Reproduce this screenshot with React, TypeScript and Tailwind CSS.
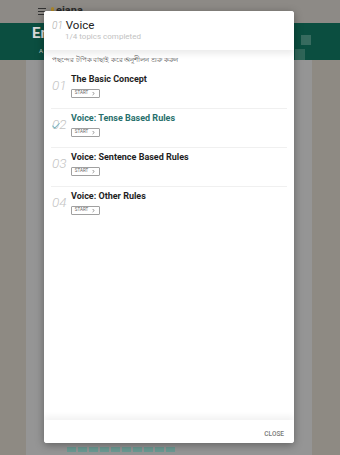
import { ChevronRight, Check } from "lucide-react";

const topics = [
  { no: "01", title: "The Basic Concept", done: false },
  { no: "02", title: "Voice: Tense Based Rules", done: true },
  { no: "03", title: "Voice: Sentence Based Rules", done: false },
  { no: "04", title: "Voice: Other Rules", done: false },
];

const font = { fontFamily: "Roboto, 'Noto Sans', 'Liberation Sans', sans-serif" };

export default function App() {
  return (
    <div className="relative w-[340px] h-[455px] overflow-hidden bg-[#8e8a83]" style={font}>
      {/* dimmed page behind the dialog */}
      <div className="flex flex-col h-full">
        <div className="h-[23px] bg-[#8d8a86] flex items-center pl-[38px] gap-[5px]">
          <div className="flex flex-col gap-[2px] w-[8px]">
            <div className="h-[1px] bg-[#333]" />
            <div className="h-[1px] bg-[#333]" />
            <div className="h-[1px] bg-[#333]" />
          </div>
          <div className="flex items-center gap-[2px] -mt-[3px]">
            <div className="w-[3px] h-[6px] rounded-full bg-[#b08a2a]" />
            <span className="text-[11px] font-bold text-[#2a2a2a] leading-none">eiana</span>
          </div>
        </div>
        <div className="h-[37px] bg-[#0b4e40] flex justify-between pl-[32px]">
          <div className="flex flex-col w-[20px]">
            <span className="text-[15px] font-bold text-[#d8d8d8] leading-[20px] whitespace-nowrap">En</span>
            <span className="text-[6px] text-[#cfcfcf] mt-[3px] pl-[7px]">A</span>
          </div>
          <div className="flex flex-col items-end gap-[4px] pt-[12px]">
            <div className="w-[10px] h-[10px] bg-[#376b5f] mr-[29px]" />
            <div className="w-[10px] h-[11px] bg-[#2f6558] mr-[35px]" />
          </div>
        </div>
        <div className="flex flex-1">
          <div className="w-[26px] bg-[#8e8a83]" />
          <div className="flex-1 bg-[#959595] flex flex-col justify-end items-start pl-[41px] pb-[3px]">
            <div className="flex gap-[2px]">
              {Array.from({ length: 10 }).map((_, i) => (
                <div key={i} className="w-[9px] h-[5px] bg-[#6c9a93]" />
              ))}
            </div>
          </div>
          <div className="w-[28px] bg-[#8e8a83]" />
        </div>
      </div>

      {/* dialog */}
      <div className="absolute left-[44px] top-[11px] w-[250px] h-[432px] bg-white rounded-[3px] shadow-[0_2px_8px_rgba(0,0,0,0.35)] flex flex-col overflow-hidden">
        <div className="h-[39px] flex flex-col pl-[8px] pt-[7px] relative z-10 bg-white shadow-[0_4px_6px_rgba(0,0,0,0.08)]">
          <div className="flex items-baseline gap-[3px]">
            <span className="text-[10px] italic font-light text-[#aaa]">01</span>
            <span className="text-[11.5px] text-[#222] leading-[13px]">Voice</span>
          </div>
          <span className="text-[8px] text-[#c2c2c2] pl-[13px] -mt-[2px]">1/4 topics completed</span>
        </div>
        <div className="flex-1 flex flex-col px-[7px] pt-[4px]">
          <p className="text-[6.5px] text-[#555] leading-[12px] pl-[1px]">
            পছন্দের টপিক বাছাই করে অনুশীলন শুরু করুন
          </p>
          <div className="flex flex-col mt-[4px]">
            {topics.map((t, i) => (
              <div
                key={i}
                className={`flex pt-[3px] pb-[10px] ${i < topics.length - 1 ? "border-b border-[#f0f0f0]" : "border-b border-transparent"}`}
              >
                <div className="w-[20px] relative flex items-center">
                  <span className="text-[13.5px] italic font-light text-[#c4c4c4] pl-[1px]">{t.no}</span>
                  {t.done && (
                    <Check className="absolute left-[0px] top-[9px] w-[10px] h-[10px] text-[#7ab7c4]" strokeWidth={2.5} />
                  )}
                </div>
                <div className="flex flex-col">
                  <span className={`text-[9px] font-bold leading-[12px] ${t.done ? "text-[#28706c]" : "text-[#1e1e1e]"}`}>
                    {t.title}
                  </span>
                  <div className="mt-[4px] h-[9px] w-[29px] border border-[#a0a0a0] rounded-[1px] flex items-center justify-center gap-[3px]">
                    <span className="text-[4.5px] text-[#666] leading-none">START</span>
                    <ChevronRight className="w-[5px] h-[5px] text-[#555]" strokeWidth={3} />
                  </div>
                </div>
              </div>
            ))}
          </div>
        </div>
        <div className="h-[23px] flex items-center justify-end pr-[10px] pt-[6px] bg-white shadow-[0_-4px_6px_rgba(0,0,0,0.05)] relative z-10">
          <span className="text-[6.5px] font-medium text-[#777]">CLOSE</span>
        </div>
      </div>
    </div>
  );
}
